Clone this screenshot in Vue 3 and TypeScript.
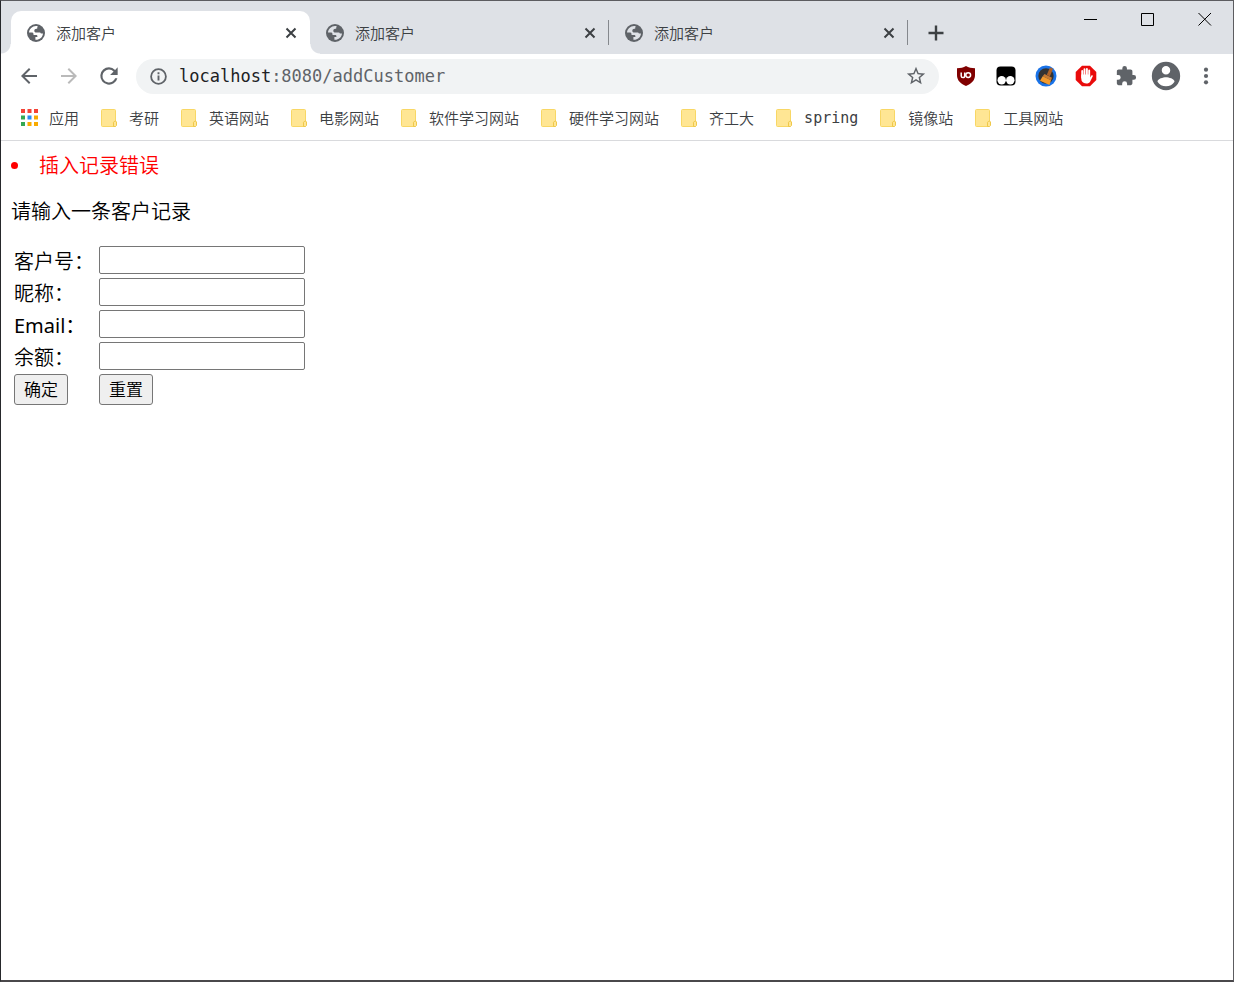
<script setup lang="ts">
import { ref } from 'vue'

interface Field {
  id: string
  label: string
  latin?: boolean
}

const tabs = ref([
  { id: 1, title: '添加客户' },
  { id: 2, title: '添加客户' },
  { id: 3, title: '添加客户' },
])
const activeTab = ref(1)

const bookmarks: string[] = [
  '考研', '英语网站', '电影网站', '软件学习网站', '硬件学习网站',
  '齐工大', 'spring', '镜像站', '工具网站',
]

const appColors: string[] = [
  '#f44336', '#f44336', '#f44336',
  '#34a853', '#2a8cf0', '#f9ab00',
  '#34a853', '#f9ab00', '#f9ab00',
]

const fields: Field[] = [
  { id: 'customer-no', label: '客户号：' },
  { id: 'nickname', label: '昵称：' },
  { id: 'email', label: 'Email：', latin: true },
  { id: 'balance', label: '余额：' },
]
</script>

<template>
  <div class="window">
    <header class="strip">
      <div class="tabs">
        <div
          v-for="tab in tabs"
          :key="tab.id"
          class="tab"
          :class="{ active: tab.id === activeTab }"
        >
          <button class="tab-main" type="button" @click="activeTab = tab.id">
            <svg class="favicon" viewBox="0 0 18 18" aria-hidden="true">
              <circle cx="9" cy="9" r="9" fill="#5f6368" />
              <path
                class="land"
                d="M10.8 2.2C6.500 1 2.200 4.400 2 8.600h2.600c1.300 0 1.900.7 1.900 1.500v.8h2.600c.9 0 1.300.5 1.300 1.300v.9H8.400v2.700c3.800.4 7.300-2.300 7.600-6.300h-1.500c-.7 0-1.100-.4-1.300-.9H9.300c-1.300 0-2-.9-2-1.900 0-1.200.9-2 2-2h.9c0-1.100.1-1.700.6-2.500z"
              />
            </svg>
            <span>{{ tab.title }}</span>
          </button>
          <button class="tab-close" type="button" aria-label="关闭标签页">
            <svg width="12" height="12" viewBox="0 0 12 12">
              <path d="M1.500 1.500l9 9M10.500 1.500l-9 9" stroke="#3c4043" stroke-width="2" />
            </svg>
          </button>
        </div>
        <button class="new-tab" type="button" aria-label="新建标签页">
          <svg width="16" height="16" viewBox="0 0 16 16">
            <path d="M8 .5v15M.5 8h15" stroke="#3c4043" stroke-width="2.400" />
          </svg>
        </button>
      </div>
      <div class="controls">
        <button type="button" aria-label="最小化">
          <svg width="14" height="14" viewBox="0 0 14 14"><path d="M0 7.500h13" stroke="#000" /></svg>
        </button>
        <button type="button" aria-label="最大化">
          <svg width="14" height="14" viewBox="0 0 14 14">
            <path d="M.5 1.500h12v12H.5z" fill="none" stroke="#000" />
          </svg>
        </button>
        <button type="button" aria-label="关闭">
          <svg width="14" height="14" viewBox="0 0 14 14">
            <path d="M.5 1l12.500 12.500M13 1L.5 13.500" stroke="#000" />
          </svg>
        </button>
      </div>
    </header>

    <nav class="toolbar">
      <button class="tool" type="button" aria-label="后退">
        <svg width="24" height="24" viewBox="0 0 24 24">
          <path d="M20 11H7.830l5.590-5.590L12 4l-8 8 8 8 1.410-1.410L7.830 13H20z" fill="#5f6368" />
        </svg>
      </button>
      <button class="tool" type="button" aria-label="前进">
        <svg width="24" height="24" viewBox="0 0 24 24">
          <path d="M4 11h12.170l-5.590-5.590L12 4l8 8-8 8-1.410-1.410L16.170 13H4z" fill="#bababa" />
        </svg>
      </button>
      <button class="tool" type="button" aria-label="重新加载">
        <svg width="26" height="26" viewBox="0 0 24 24">
          <path
            d="M17.650 6.350A7.960 7.960 0 0 0 12 4a8 8 0 1 0 7.730 10h-2.080A6 6 0 1 1 12 6c1.660 0 3.140.69 4.220 1.780L13 11h7V4z"
            fill="#5f6368"
          />
        </svg>
      </button>
      <div class="omnibox">
        <svg class="info" viewBox="0 0 17 17" aria-hidden="true">
          <circle cx="8.500" cy="8.500" r="7.400" fill="none" stroke="#5f6368" stroke-width="1.800" />
          <path d="M8.500 7.500v5M8.500 4.300v2" stroke="#5f6368" stroke-width="1.900" />
        </svg>
        <a class="url" href="#"><span class="host">localhost</span>:8080/addCustomer</a>
        <button class="star" type="button" aria-label="为此标签页添加书签">
          <svg width="22" height="22" viewBox="0 0 24 24">
            <path
              d="M22 9.240l-7.190-.62L12 2 9.190 8.630 2 9.240l5.460 4.730L5.820 21 12 17.270 18.180 21l-1.630-7.030L22 9.240zM12 15.400l-3.760 2.270 1-4.280-3.320-2.880 4.380-.38L12 6.100l1.710 4.040 4.380.38-3.320 2.880 1 4.280L12 15.400z"
              fill="#5f6368"
            />
          </svg>
        </button>
      </div>
      <button class="tool" type="button" aria-label="uBlock Origin">
        <svg width="20" height="20" viewBox="0 0 20 20">
          <path d="M10 0c2.500 1.600 5.500 2.200 9 2.200V9c0 5.300-3.200 8.500-9 11C4.200 17.500 1 14.300 1 9V2.200C4.500 2.200 7.500 1.600 10 0z" fill="#800000" />
          <path d="M5.200 6.500v3.400c0 1.100.7 1.700 1.700 1.700s1.800-.6 1.800-1.700V6.500" fill="none" stroke="#fff" stroke-width="1.500" />
          <circle cx="12.200" cy="9.100" r="2.400" fill="none" stroke="#fff" stroke-width="1.500" />
        </svg>
      </button>
      <button class="tool" type="button" aria-label="Tampermonkey">
        <svg width="20" height="20" viewBox="0 0 20 20">
          <rect x=".5" y=".5" width="19" height="19" rx="4" fill="#000" />
          <circle cx="5.700" cy="14.200" r="4.200" fill="#fff" />
          <circle cx="14.300" cy="14.200" r="4.200" fill="#fff" />
        </svg>
      </button>
      <button class="tool" type="button" aria-label="清理缓存">
        <svg width="22" height="22" viewBox="0 0 22 22">
          <circle cx="11" cy="11" r="10.500" fill="#1a73e8" />
          <circle cx="11" cy="11" r="7.700" fill="#333" />
          <path d="M15 2.500l3 1.200-3.200 7.700-3-1.600z" fill="#ad6229" />
          <path d="M9.500 9l7.500 3.800-1 2.400-8.300-4z" fill="#c67a33" />
          <path d="M7.700 11.200l8.300 4-1.600 4.800L5 15.800z" fill="#f29a2e" />
        </svg>
      </button>
      <button class="tool" type="button" aria-label="AdBlock">
        <svg width="22" height="22" viewBox="0 0 22 22">
          <path d="M7 .7h8L21.300 7v8L15 21.300H7L.7 15V7z" fill="#e90b0b" />
          <path
            d="M7.200 12.500V6M9.500 11V4.200M11.900 11V4M14.200 11.500V5.500"
            stroke="#fff" stroke-width="1.900" stroke-linecap="round"
          />
          <path d="M6.300 9.500h8.800v3l1.300-1.900c.8-.7 1.700-.1 1.300.8l-2.500 5c-.8 1.400-1.900 2-4.100 2-3.200 0-4.800-1.800-4.800-4.600z" fill="#fff" />
        </svg>
      </button>
      <button class="tool" type="button" aria-label="扩展程序">
        <svg width="22" height="22" viewBox="0 0 24 24">
          <path
            d="M20.500 11H19V7c0-1.100-.9-2-2-2h-4V3.500a2.500 2.500 0 0 0-5 0V5H4c-1.100 0-1.990.9-1.990 2v3.800H3.500a2.700 2.700 0 0 1 0 5.400H2V20c0 1.100.9 2 2 2h3.800v-1.500a2.700 2.700 0 0 1 5.400 0V22H17c1.100 0 2-.9 2-2v-4h1.500a2.500 2.500 0 0 0 0-5z"
            fill="#5f6368"
          />
        </svg>
      </button>
      <button class="tool" type="button" aria-label="个人资料">
        <svg width="34" height="34" viewBox="0 0 24 24">
          <path
            d="M12 2a10 10 0 1 0 0 20 10 10 0 0 0 0-20zm0 3a3 3 0 1 1 0 6 3 3 0 0 1 0-6zm0 14.200a7.200 7.200 0 0 1-6-3.220c.03-1.990 4-3.080 6-3.080 1.990 0 5.970 1.090 6 3.080a7.200 7.200 0 0 1-6 3.220z"
            fill="#5f6368"
          />
        </svg>
      </button>
      <button class="tool" type="button" aria-label="菜单">
        <svg width="20" height="20" viewBox="0 0 20 20" fill="#5f6368">
          <circle cx="10" cy="3.700" r="2.100" />
          <circle cx="10" cy="10" r="2.100" />
          <circle cx="10" cy="16.300" r="2.100" />
        </svg>
      </button>
    </nav>

    <nav class="bookmarks">
      <a class="apps" href="#">
        <svg width="17" height="17" viewBox="0 0 17 17" aria-hidden="true">
          <rect
            v-for="(color, i) in appColors"
            :key="i"
            :x="(i % 3) * 6.500"
            :y="Math.floor(i / 3) * 6.500"
            width="4"
            height="4"
            :fill="color"
          />
        </svg>
        <span>应用</span>
      </a>
      <a v-for="name in bookmarks" :key="name" href="#">
        <svg width="16" height="18" viewBox="0 0 16 18" aria-hidden="true">
          <rect x=".5" y=".5" width="14" height="17" rx="1" fill="#ffe694" stroke="#f8d765" />
          <path d="M12.500 17.500v-4.200l1.500-1.500 1.500 1v3.700l-1 1z" fill="#ffe694" stroke="#efc84a" />
        </svg>
        <span :class="{ mono: name === 'spring' }">{{ name }}</span>
      </a>
    </nav>

    <main class="page">
      <ul class="errors">
        <li>插入记录错误</li>
      </ul>
      <p>请输入一条客户记录</p>
      <form @submit.prevent>
        <table>
          <tbody>
            <tr v-for="field in fields" :key="field.id">
              <td class="label">
                <label :for="field.id" :class="{ latin: field.latin }">{{ field.label }}</label>
              </td>
              <td><input :id="field.id" :name="field.id" type="text" /></td>
            </tr>
            <tr>
              <td><button type="submit">确定</button></td>
              <td><button type="reset">重置</button></td>
            </tr>
          </tbody>
        </table>
      </form>
    </main>
  </div>
</template>

<style>
body {
  margin: 0;
}
</style>

<style scoped>
.window {
  box-sizing: border-box;
  display: flex;
  flex-direction: column;
  min-height: 100vh;
  border: 1px solid #5c5c60;
  border-left-color: #26282b;
  border-bottom: 2px solid #4a484b;
  background: #fff;
  font-family: "Noto Sans", "Noto Sans CJK SC", sans-serif;
  font-weight: 350;
}

svg {
  display: block;
  flex: none;
}

.strip button,
.toolbar button {
  display: flex;
  align-items: center;
  justify-content: center;
  padding: 0;
  border: 0;
  background: none;
  color: inherit;
  font: inherit;
}

.strip {
  display: flex;
  justify-content: space-between;
  height: 53px;
  background: #dee1e6;
}

.tabs {
  display: flex;
  flex: 1;
  align-items: flex-end;
  min-width: 0;
  padding-left: 10px;
}

.tab {
  position: relative;
  box-sizing: border-box;
  display: flex;
  align-items: center;
  flex: 0 1 299px;
  height: 43px;
  padding: 0 11px 0 16px;
  color: #3c4043;
  font-size: 15px;
}

.tab.active {
  border-radius: 10px 10px 0 0;
  background: #fff;
}

/* Flared feet of the selected tab */
.tab.active::before,
.tab.active::after {
  content: "";
  position: absolute;
  bottom: 0;
  width: 10px;
  height: 10px;
}

.tab.active::before {
  right: 100%;
  background: radial-gradient(circle at 0 0, #dee1e6 9px, #fff 10px);
}

.tab.active::after {
  left: 100%;
  background: radial-gradient(circle at 100% 0, #dee1e6 9px, #fff 10px);
}

.tab:not(.active)::after {
  content: "";
  position: absolute;
  right: 0;
  width: 1px;
  height: 25px;
  background: #85888d;
}

.strip .tab-main {
  flex: 1;
  justify-content: flex-start;
  gap: 11px;
  min-width: 0;
  height: 100%;
}

.favicon {
  width: 18px;
  height: 18px;
}

.land {
  fill: #dee1e6;
}

.active .land {
  fill: #fff;
}

.strip .tab-close {
  width: 16px;
  height: 16px;
}

.strip .new-tab {
  width: 36px;
  height: 43px;
  margin-left: 10px;
}

.controls {
  display: flex;
}

.strip .controls button {
  width: 57px;
  height: 35px;
}

.toolbar {
  display: flex;
  align-items: center;
  height: 44px;
  padding: 0 7px 0 8px;
}

.toolbar .tool {
  flex: none;
  width: 40px;
  height: 40px;
}

.omnibox {
  box-sizing: border-box;
  display: flex;
  align-items: center;
  flex: 1;
  min-width: 0;
  height: 35px;
  margin: 0 7px;
  padding: 0 12px 0 14px;
  border-radius: 18px;
  background: #f1f3f4;
}

.info {
  width: 17px;
  height: 17px;
}

.url {
  flex: 1;
  min-width: 0;
  margin-left: 12px;
  overflow: hidden;
  color: #5f6368;
  font-family: "DejaVu Sans Mono", monospace;
  font-size: 17px;
  text-decoration: none;
  white-space: nowrap;
}

.host {
  color: #202124;
}

.bookmarks {
  display: flex;
  align-items: center;
  gap: 22px;
  height: 39px;
  padding: 0 20px 3px;
  border-bottom: 1px solid #d9dadd;
  overflow: hidden;
}

.bookmarks a {
  display: flex;
  align-items: center;
  gap: 12px;
  color: #3c4043;
  font-size: 15px;
  line-height: 20px;
  text-decoration: none;
  white-space: nowrap;
}

.bookmarks .apps {
  gap: 11px;
}

.bookmarks .mono {
  font-family: "DejaVu Sans Mono", monospace;
}

.page {
  flex: 1;
  padding: 11px 10px;
  color: #000;
  font-size: 20px;
  line-height: 28px;
}

.errors {
  margin: 0;
  padding: 0;
  color: #f00;
  list-style: none;
}

.errors li {
  display: flex;
  align-items: center;
  gap: 21px;
}

.errors li::before {
  content: "";
  width: 7px;
  height: 7px;
  margin-bottom: 2px;
  border-radius: 50%;
  background: #f00;
}

.page p {
  margin: 18px 0 17px;
}

.page table {
  border-spacing: 2px;
}

.page td {
  padding: 1px;
}

.page .label {
  width: 81px;
}

.page label,
.page input,
.page td button {
  display: block;
}

.page label {
  padding-top: 4px;
  line-height: 24px;
}

.page .latin {
  font-weight: 400;
}

.page input {
  box-sizing: border-box;
  width: 206px;
  height: 28px;
  padding: 1px 3px;
  border: 1px solid #767676;
  border-radius: 2px;
  background: #fff;
  font: inherit;
  font-size: 17px;
}

.page td button {
  box-sizing: border-box;
  height: 31px;
  padding: 0 9px;
  border: 1px solid #767676;
  border-radius: 3px;
  background: #efefef;
  color: #000;
  font: inherit;
  font-size: 17px;
}
</style>
